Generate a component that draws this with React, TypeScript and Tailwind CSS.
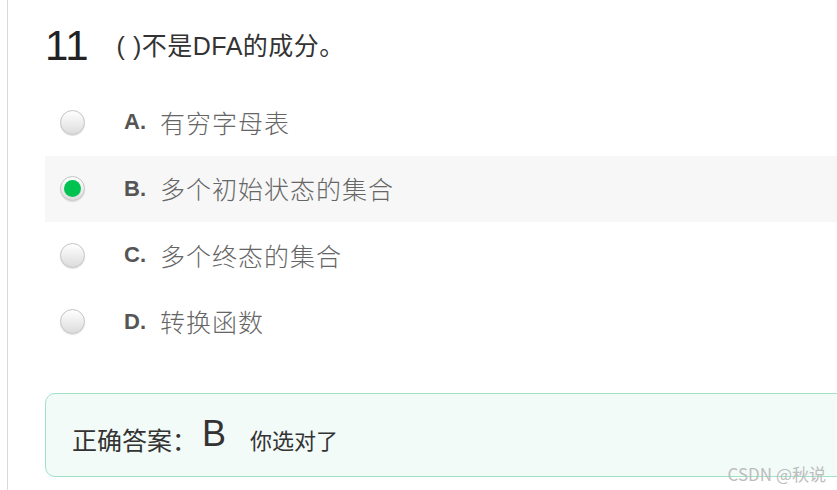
import React from "react";

const options = [
  { key: "A", text: "有穷字母表", checked: false },
  { key: "B", text: "多个初始状态的集合", checked: true },
  { key: "C", text: "多个终态的集合", checked: false },
  { key: "D", text: "转换函数", checked: false },
];

function Radio({ checked }: { checked: boolean }) {
  return (
    <div className="w-[25px] h-[25px] rounded-full border border-[#c4c4c4] bg-gradient-to-b from-[#ffffff] to-[#dcdcdc] shadow-[0_1px_1px_rgba(0,0,0,0.12)] flex items-center justify-center">
      {checked && <div className="w-[17px] h-[17px] rounded-full bg-[#00c250]" />}
    </div>
  );
}

export default function App() {
  return (
    <div
      className="relative w-[837px] h-[490px] overflow-hidden bg-white flex"
      style={{ fontFamily: '"Liberation Sans", Arial, "Noto Sans CJK SC", sans-serif' }}
    >
      <div className="ml-[7px] w-px h-full bg-[#d9d9d9]" />
      <div className="flex-1 pl-[37px] flex flex-col">
        <div className="h-[89px] pt-[3px] flex items-center">
          <span className="text-[42px] leading-none text-[#222]">11</span>
          <span className="ml-[28px] text-[25px] tracking-[0.5px] leading-none text-[#333]">( )不是DFA的成分。</span>
        </div>
        {options.map((o) => (
          <div
            key={o.key}
            className={`h-[66.5px] flex items-center pl-[15px] ${o.checked ? "bg-[#f7f7f7]" : ""}`}
          >
            <Radio checked={o.checked} />
            <span className="ml-[39px] text-[22px] font-bold text-[#555] leading-none">{o.key}.</span>
            <span
              className="ml-[14px] text-[25px] tracking-[1px] leading-none text-[#666] font-light"
              style={{ fontFamily: '"Noto Sans CJK SC", sans-serif' }}
            >
              {o.text}
            </span>
          </div>
        ))}
        <div className="mt-[38px] h-[84px] -mr-[20px] rounded-[10px] border border-[#9fe2c5] bg-[#f2fbf8] flex items-center pl-[26px] pt-[8px]">
          <span className="text-[25px] text-[#333] leading-none" style={{ fontFamily: '"Noto Sans CJK SC", sans-serif' }}>
            正确答案：
          </span>
          <span className="ml-[5px] -mt-[10px] text-[36px] text-[#333] leading-none">B</span>
          <span className="ml-[24px] text-[22px] text-[#333] leading-none" style={{ fontFamily: '"Noto Sans CJK SC", sans-serif' }}>
            你选对了
          </span>
        </div>
      </div>
      <div
        className="absolute right-[11px] bottom-[8px] text-[17px] text-[#bdbdbd] leading-none"
        style={{ fontFamily: '"Noto Sans CJK SC", sans-serif' }}
      >
        CSDN @秋说
      </div>
    </div>
  );
}
